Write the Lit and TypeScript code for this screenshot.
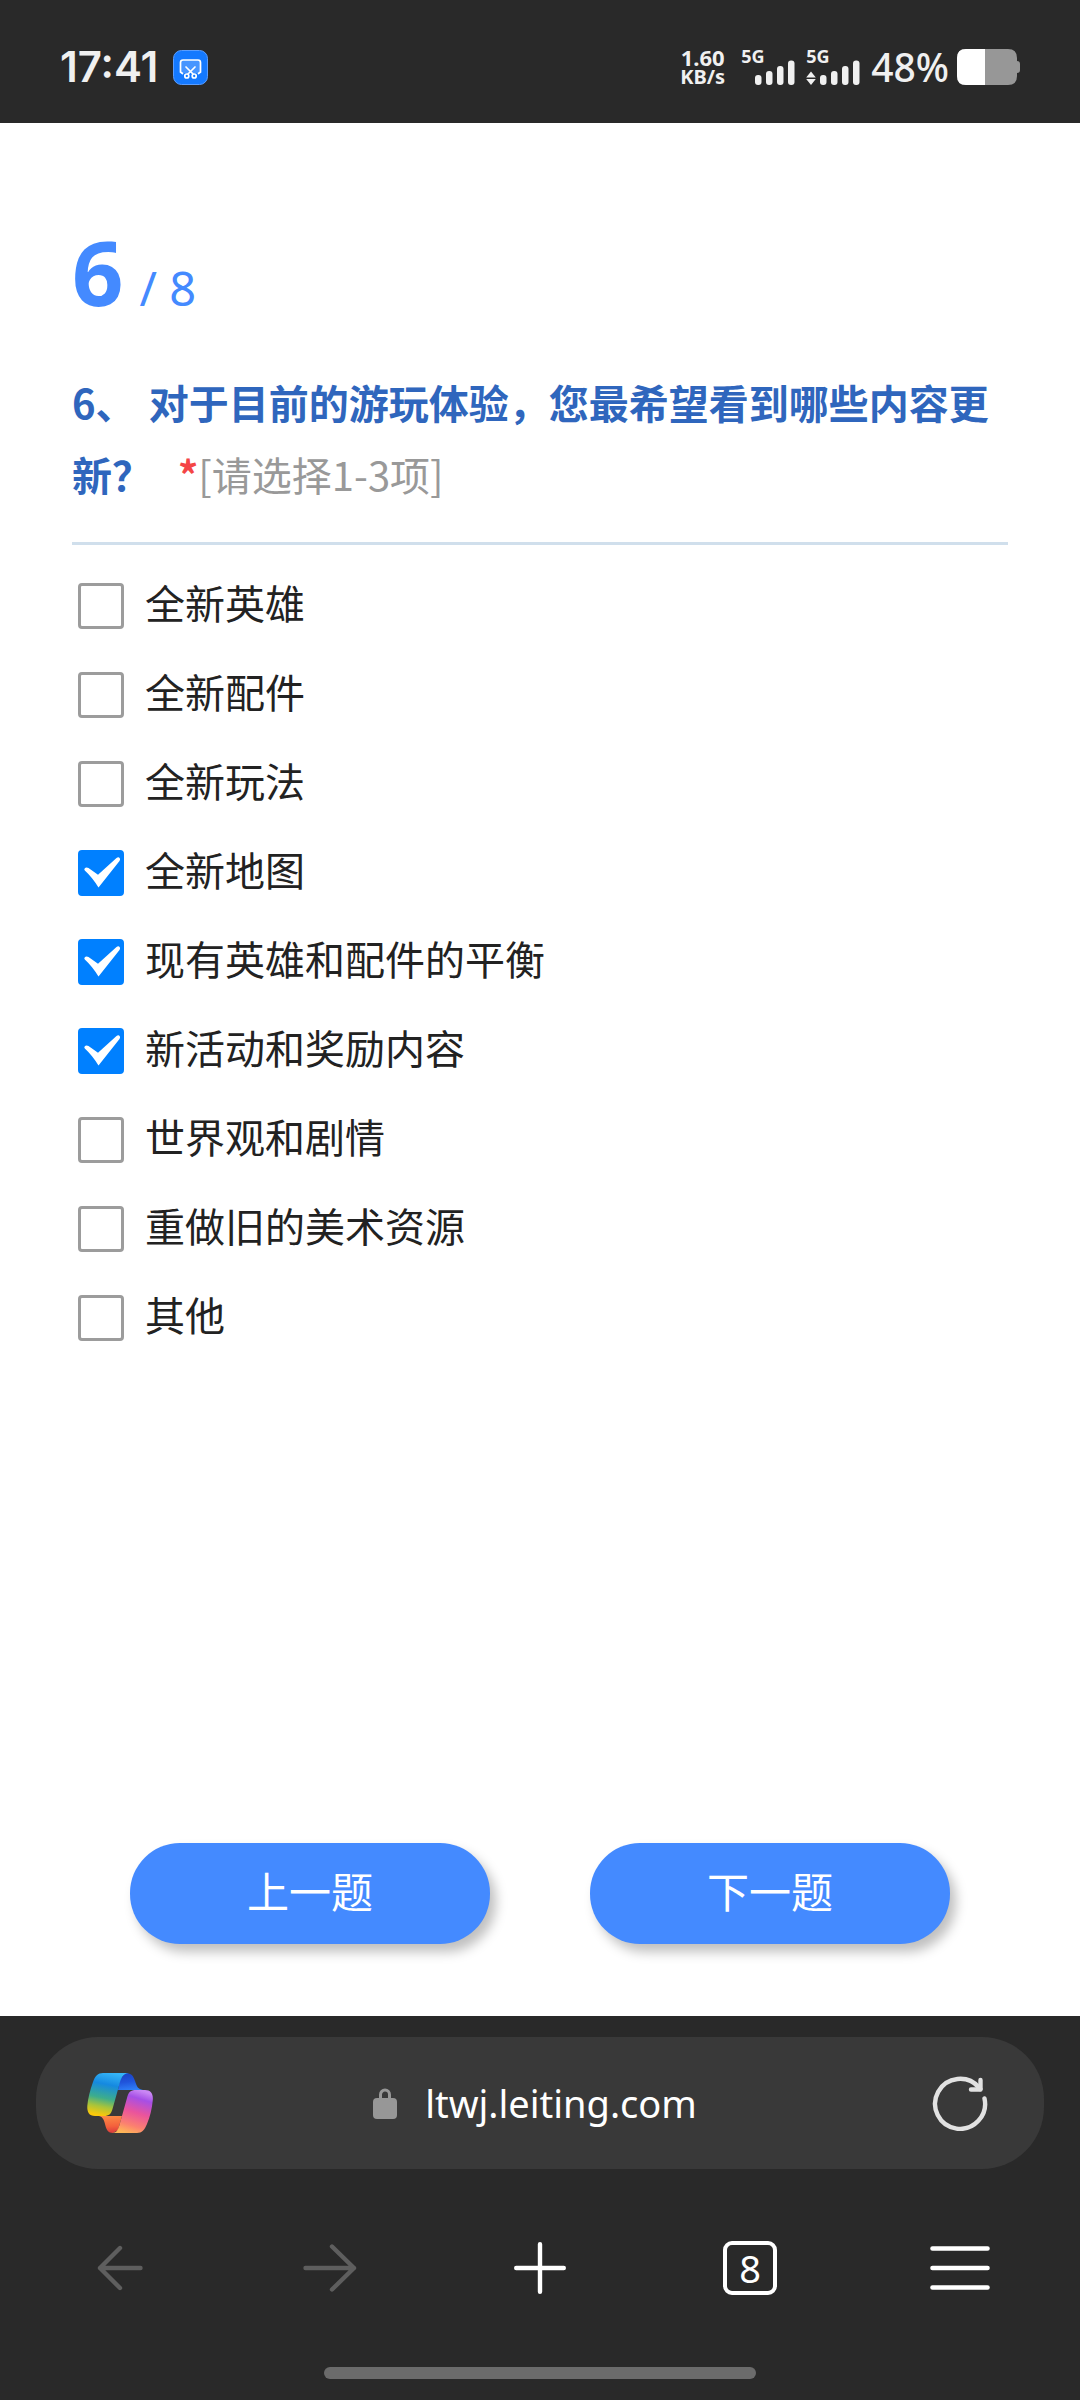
import { LitElement, html, svg, css } from "lit";
import { customElement, property, state } from "lit/decorators.js";

interface Option {
  label: string;
  checked: boolean;
}

const MAX_CHOICES = 3;

@customElement("status-bar")
class StatusBar extends LitElement {
  static styles = css`
    :host {
      display: block;
      background: #292929;
      color: #f0f0f0;
      font-family: "Noto Sans", "Noto Sans CJK SC", sans-serif;
    }
    .bar {
      display: flex;
      align-items: center;
      justify-content: space-between;
      height: 123px;
      box-sizing: border-box;
      padding: 11px 60px 0 60px;
    }
    .side {
      display: flex;
      align-items: center;
    }
    .time {
      font: 600 42px/48px Inter, sans-serif;
      margin-right: 15px;
    }
    .speed {
      display: flex;
      flex-direction: column;
      align-items: center;
      font-weight: 700;
      font-size: 20px;
      line-height: 20px;
      margin-right: 16px;
    }
    .rate {
      font-size: 22px;
    }
    .signal {
      display: grid;
      height: 36px;
      margin-right: 10px;
    }
    .signal > * {
      grid-area: 1 / 1;
    }
    .net {
      font-weight: 700;
      font-size: 18px;
      line-height: 14px;
    }
    .percent {
      font-weight: 500;
      font-size: 39px;
      line-height: 48px;
      margin-right: 8px;
    }
    svg {
      display: block;
    }
  `;

  private signal(active: boolean) {
    return html`<div class="signal">
      <span class="net">5G</span>
      <svg width="55" height="36" viewBox="0 0 55 36" fill="#f0f0f0" aria-hidden="true">
        ${active ? svg`<path d="M5 22.500 9.800 28.500H.2ZM5 36 .2 30H9.800Z" />` : null}
        <rect x="14" y="26" width="6.500" height="10" rx="3" />
        <rect x="25" y="22" width="6.500" height="14" rx="3" />
        <rect x="36" y="17" width="6.500" height="19" rx="3" />
        <rect x="47" y="11.500" width="6.500" height="24.500" rx="3" />
      </svg>
    </div>`;
  }

  render() {
    return html`<div class="bar">
      <div class="side">
        <span class="time">17:41</span>
        <svg width="35" height="35" viewBox="0 0 35 35" fill="none" aria-hidden="true">
          <rect x=".5" y=".5" width="34" height="34" rx="8" fill="#1479ff" stroke="#5a9dff" />
          <rect x="7.500" y="10" width="20" height="13" rx="2" fill="#4795ff" />
          <g stroke="#fff" stroke-width="1.700" stroke-linecap="round">
            <path d="M9.500 23.500 7.500 22V12.500Q7.500 10 10 10H25Q27.500 10 27.500 12.500V22L25.500 23.500" />
            <path d="M13 17 20.500 24.500M22 17 14.500 24.500" />
            <circle cx="13.800" cy="26" r="2" fill="#1479ff" />
            <circle cx="21.200" cy="26" r="2" fill="#1479ff" />
          </g>
        </svg>
      </div>
      <div class="side">
        <div class="speed"><span class="rate">1.60</span><span>KB/s</span></div>
        ${this.signal(false)} ${this.signal(true)}
        <span class="percent">48%</span>
        <svg width="63" height="36" viewBox="0 0 63 36" aria-hidden="true">
          <path d="M9 0H51Q60 0 60 9V12Q63 12 63 15V21Q63 24 60 24V27Q60 36 51 36H9Q0 36 0 27V9Q0 0 9 0Z" fill="#979797" />
          <path d="M28 0V36H9Q0 36 0 27V9Q0 0 9 0Z" fill="#fff" />
        </svg>
      </div>
    </div>`;
  }
}

@customElement("survey-question")
class SurveyQuestion extends LitElement {
  @property({ type: Number }) current = 6;
  @property({ type: Number }) total = 8;

  @state() private options: Option[] = [
    { label: "全新英雄", checked: false },
    { label: "全新配件", checked: false },
    { label: "全新玩法", checked: false },
    { label: "全新地图", checked: true },
    { label: "现有英雄和配件的平衡", checked: true },
    { label: "新活动和奖励内容", checked: true },
    { label: "世界观和剧情", checked: false },
    { label: "重做旧的美术资源", checked: false },
    { label: "其他", checked: false },
  ];

  static styles = css`
    :host {
      display: flex;
      flex-direction: column;
      box-sizing: border-box;
      padding: 96px 72px 72px;
      background: #fff;
      color: #222;
      font-family: "Noto Sans CJK SC", sans-serif;
    }
    .progress {
      display: flex;
      align-items: baseline;
      gap: 16px;
      margin: 0;
      color: #448aff;
      font-family: "Noto Sans", sans-serif;
      font-size: 47px;
      line-height: 104px;
      font-weight: 400;
    }
    .current {
      font-size: 90px;
      font-weight: 700;
    }
    .question {
      margin: 0;
      border: 0;
      padding: 0;
      min-width: 0;
    }
    .title {
      display: block;
      width: 100%;
      box-sizing: border-box;
      margin: 0;
      padding: 26px 0 32px;
      border-bottom: 3px solid #d0dfec;
      color: #2f66bd;
      font-size: 40px;
      line-height: 72px;
      font-weight: 700;
    }
    .number {
      margin-right: 4px;
    }
    .required {
      margin-left: 26px;
      color: #f44545;
    }
    .hint {
      color: #999;
      font-weight: 400;
    }
    .options {
      list-style: none;
      margin: 0;
      padding: 16px 0 0 6px;
    }
    .option {
      display: flex;
      align-items: center;
      gap: 21px;
      height: 89px;
      font-size: 40px;
      font-weight: 400;
      line-height: 60px;
    }
    .text {
      padding-bottom: 8px;
    }
    .check {
      display: grid;
    }
    .check > * {
      grid-area: 1 / 1;
    }
    .box {
      appearance: none;
      box-sizing: border-box;
      width: 46px;
      height: 46px;
      margin: 0;
      border: 3px solid #9c9c9c;
      border-radius: 4px;
      background: #fff;
    }
    .box:checked {
      border-color: #0080ff;
      background: #0080ff;
    }
    .tick {
      pointer-events: none;
    }
    .actions {
      display: grid;
      grid-template-columns: 1fr 1fr;
      gap: 100px;
      margin-top: auto;
      padding: 0 58px;
    }
    .action {
      height: 101px;
      border: 0;
      border-radius: 50px;
      padding: 0 0 8px;
      background: #448aff;
      box-shadow: 6px 8px 12px rgba(0, 0, 0, 0.25);
      color: #fff;
      font: 400 42px/60px "Noto Sans CJK SC", sans-serif;
    }
  `;

  private toggle(index: number, e: Event) {
    const input = e.target as HTMLInputElement;
    const chosen = this.options.filter((o) => o.checked).length;
    if (input.checked && chosen >= MAX_CHOICES) {
      input.checked = false;
      return;
    }
    this.options = this.options.map((o, i) =>
      i === index ? { ...o, checked: input.checked } : o
    );
  }

  render() {
    return html`
      <p class="progress">
        <span class="current">${this.current}</span>
        <span>/ ${this.total}</span>
      </p>
      <fieldset class="question">
        <legend class="title"><span class="number">6、 </span>对于目前的游玩体验，您最希望看到哪些内容更新？<span class="required">*</span><span class="hint">[请选择1-3项]</span></legend>
        <ul class="options">
          ${this.options.map(
            (o, i) => html`<li class="option">
              <span class="check">
                <input
                  class="box"
                  type="checkbox"
                  id="option-${i}"
                  .checked=${o.checked}
                  @change=${(e: Event) => this.toggle(i, e)}
                />
                ${o.checked
                  ? html`<svg class="tick" width="46" height="46" viewBox="0 0 46 46" fill="#fff" aria-hidden="true">
                      <path d="M6.500 18.800Q8 16.600 10.500 18L20 24.800 38.500 8Q40.500 6.600 41.800 8.200 42.500 9.500 41.500 11L20.500 37.500Q14 27 6.800 20.500Q6 19.600 6.500 18.800Z" />
                    </svg>`
                  : null}
              </span>
              <label class="text" for="option-${i}">${o.label}</label>
            </li>`
          )}
        </ul>
      </fieldset>
      <div class="actions">
        <button class="action" type="button">上一题</button>
        <button class="action" type="button">下一题</button>
      </div>
    `;
  }
}

@customElement("browser-bar")
class BrowserBar extends LitElement {
  static styles = css`
    :host {
      display: block;
      padding: 21px 0;
      background: #292929;
      color: #fff;
      font-family: "Noto Sans", sans-serif;
    }
    button {
      display: grid;
      place-items: center;
      border: 0;
      padding: 0;
      background: none;
      color: inherit;
      font: inherit;
    }
    .address {
      display: grid;
      grid-template-columns: 66px 1fr 66px;
      align-items: center;
      height: 132px;
      margin: 0 36px;
      padding: 0 51px;
      border-radius: 62px;
      background: #393939;
    }
    .site {
      display: flex;
      align-items: center;
      justify-content: center;
      gap: 28px;
      margin-right: 10px;
      color: #fff;
      font-size: 38px;
      line-height: 56px;
      text-decoration: none;
    }
    .nav {
      display: grid;
      grid-template-columns: repeat(5, 1fr);
      align-items: center;
      height: 198px;
      padding: 0 15px;
    }
    .nav button {
      height: 100px;
    }
    .dim {
      color: #5e5e5e;
    }
    .tabs {
      display: grid;
      place-items: center;
      width: 54px;
      height: 54px;
      box-sizing: border-box;
      border: 4px solid #fff;
      border-radius: 9px;
      font-size: 38px;
      line-height: 46px;
      font-weight: 400;
    }
    .home {
      width: 40%;
      height: 12px;
      margin: 0 auto;
      border-radius: 6px;
      background: #6b6b6b;
    }
    svg {
      display: block;
    }
  `;

  render() {
    return html`
      <div class="address">
        <button type="button" aria-label="Copilot">
          <svg width="66" height="60" viewBox="0 0 66 60" aria-hidden="true">
            <defs>
              <linearGradient id="left" x1=".6" y1="0" x2=".4" y2="1">
                <stop offset="0" stop-color="#35b5f7" />
                <stop offset=".28" stop-color="#1589e0" />
                <stop offset=".6" stop-color="#3dad8c" />
                <stop offset=".8" stop-color="#a9c43a" />
                <stop offset="1" stop-color="#fbc90a" />
              </linearGradient>
              <linearGradient id="back" x1=".4" y1="0" x2=".6" y2="1">
                <stop offset="0" stop-color="#1c42c4" />
                <stop offset=".5" stop-color="#2055dc" />
                <stop offset="1" stop-color="#2f80f8" />
              </linearGradient>
              <linearGradient id="right" x1=".65" y1="0" x2=".35" y2="1">
                <stop offset="0" stop-color="#c986f4" />
                <stop offset=".18" stop-color="#a64fe6" />
                <stop offset=".5" stop-color="#ea549c" />
                <stop offset=".8" stop-color="#fb8070" />
                <stop offset="1" stop-color="#ffb657" />
              </linearGradient>
              <linearGradient id="front" x1=".5" y1="0" x2=".6" y2="1">
                <stop offset="0" stop-color="#fb8a45" />
                <stop offset=".6" stop-color="#f4613c" />
                <stop offset="1" stop-color="#d8393c" />
              </linearGradient>
            </defs>
            <path d="M38 0C44 0 46 2 48 8C50 14 51 16 56 17H31L33 6Z" fill="url(#back)" />
            <path d="M12 43H35L31 57L26 60C20 60 19 55 18 51C17 47 16 44 12 43Z" fill="url(#front)" />
            <path d="M16 0H42C36 0 34 5 32.500 11L25.500 36C24 41 22 43 17 43H8C2 43 0 39 .3 33C.8 26 3 17 6 9C8 3 11 0 16 0Z" fill="url(#left)" />
            <path d="M49 17H58C64 17 66.300 21 65.800 27C65 36 63 44 60 51C57.500 57 55 60 50 60H25C30 60 31.500 56 33 50L40 25C41.500 19 43.500 17 49 17Z" fill="url(#right)" />
          </svg>
        </button>
        <a class="site" href="#">
          <svg width="24" height="31" viewBox="0 0 24 31" aria-hidden="true">
            <path d="M7.500 12V6.500a4.500 4.500 0 0 1 9 0V12" fill="none" stroke="#979797" stroke-width="3" />
            <rect x="0" y="10" width="24" height="21" rx="4" fill="#979797" />
          </svg>
          ltwj.leiting.com
        </a>
        <button type="button" aria-label="刷新">
          <svg width="56" height="56" viewBox="0 0 56 56" fill="none" stroke="#e2e2e2" stroke-width="4.400" stroke-linecap="round" stroke-linejoin="round" aria-hidden="true">
            <path d="M52.500 23.500A25 25 0 1 1 47 12.500L48.300 14" />
            <path d="M48.500 5V14.500H39" />
          </svg>
        </button>
      </div>
      <nav class="nav">
        <button class="dim" type="button" aria-label="后退">
          <svg width="46" height="46" viewBox="0 0 46 46" fill="none" stroke="currentColor" stroke-width="4.400" stroke-linecap="round" stroke-linejoin="round" aria-hidden="true">
            <path d="M43.500 23H3M23 3 3 23 23 43" />
          </svg>
        </button>
        <button class="dim" type="button" aria-label="前进">
          <svg width="54" height="48" viewBox="0 0 54 48" fill="none" stroke="currentColor" stroke-width="4.400" stroke-linecap="round" stroke-linejoin="round" aria-hidden="true">
            <path d="M2.500 24H51M29 2.500 51 24 29 45.500" />
          </svg>
        </button>
        <button type="button" aria-label="新建标签页">
          <svg width="52" height="52" viewBox="0 0 52 52" fill="none" stroke="currentColor" stroke-width="4.400" stroke-linecap="round" aria-hidden="true">
            <path d="M2.200 26H49.800M26 2.200V49.800" />
          </svg>
        </button>
        <button type="button" aria-label="标签页"><span class="tabs">8</span></button>
        <button type="button" aria-label="菜单">
          <svg width="60" height="44" viewBox="0 0 60 44" fill="none" stroke="currentColor" stroke-width="4.600" stroke-linecap="round" aria-hidden="true">
            <path d="M2.500 2.500H57.500M2.500 22H57.500M2.500 41.500H57.500" />
          </svg>
        </button>
      </nav>
      <div class="home"></div>
    `;
  }
}

@customElement("app-root")
class AppRoot extends LitElement {
  static styles = css`
    :host {
      display: flex;
      flex-direction: column;
      min-height: 100vh;
      background: #fff;
    }
    .content {
      flex: 1;
    }
  `;

  render() {
    return html`
      <status-bar></status-bar>
      <survey-question class="content"></survey-question>
      <browser-bar></browser-bar>
    `;
  }
}
